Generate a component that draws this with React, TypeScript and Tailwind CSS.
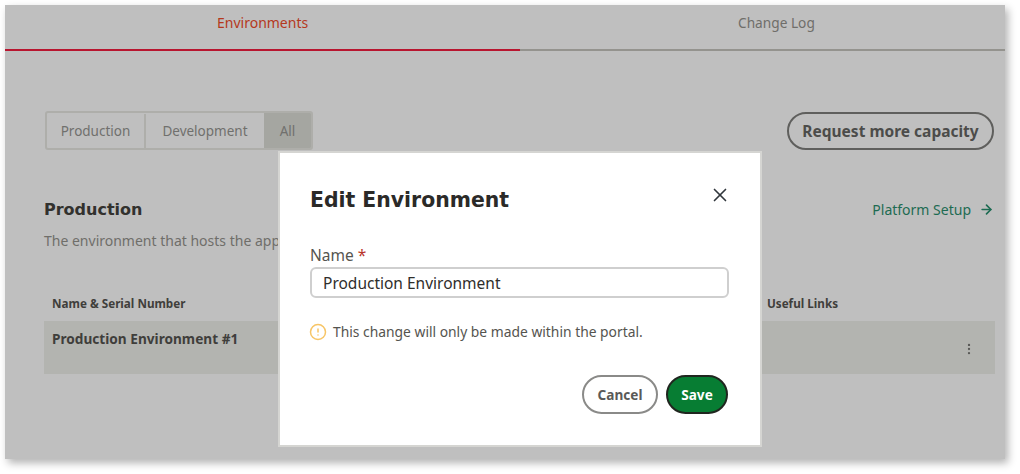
import { ArrowRight, CircleAlert, EllipsisVertical, X } from 'lucide-react';

const font = { fontFamily: '"Noto Sans", sans-serif' };

function Tabs() {
  return (
    <div className="flex h-[46px] shrink-0">
      <div className="w-[515px] border-b-2 border-[#b8152f] pt-[9px] pl-[212px] text-[14px] leading-[18px] text-[#b5381c]">
        Environments
      </div>
      <div className="flex-1 border-b-2 border-[#94938e] pt-[9px] pl-[218px] text-[13.7px] leading-[18px] text-[#6f6e6a]">
        Change Log
      </div>
    </div>
  );
}

function Filters() {
  return (
    <div className="ml-[1px] flex h-[39px] w-[268px] overflow-hidden rounded-[3px] border-2 border-[#aeaeaa] pt-[1px] text-[13.5px] text-[#70706d]">
      <div className="flex w-[99px] items-center justify-center border-r-2 border-[#aeaeaa]">Production</div>
      <div className="flex w-[118px] items-center justify-center">Development</div>
      <div className="-mt-[1px] flex flex-1 items-center justify-center bg-[#a5a6a1] pt-[1px]">All</div>
    </div>
  );
}

function EditModal() {
  return (
    <div className="absolute left-[273px] top-[146px] flex h-[296px] w-[484px] flex-col border-2 border-[#d5d5d2] bg-white px-[30px]">
      <div className="flex items-start justify-between pt-[32px]">
        <h2 className="font-['DejaVu_Sans'] text-[20.4px] leading-[30px] font-bold text-[#2b2a28]">Edit Environment</h2>
        <X className="mt-[-1px] mr-[-1px] h-[22px] w-[22px] text-[#30363c]" strokeWidth={1.8} />
      </div>
      <div className="mt-[30px] text-[15.5px] leading-[20px] text-[#55544f]">
        Name <span className="text-[#b8352a]">*</span>
      </div>
      <div className="mt-[2px] flex h-[31px] w-[419px] items-center rounded-[6px] border-2 border-[#cfcfcf] px-[11px] pt-[2px] text-[15.5px] text-[#2f2e2b]">
        Production Environment
      </div>
      <div className="mt-[25px] flex items-center gap-[6px] text-[13.85px] leading-[18px] text-[#55544f]">
        <CircleAlert className="-ml-[1px] h-[18px] w-[18px] text-[#f7c566]" strokeWidth={2} />
        This change will only be made within the portal.
      </div>
      <div className="mt-[34px] flex w-[418px] justify-end gap-[8px] text-[13.6px] font-bold">
        <button className="h-[39px] w-[76px] rounded-full border-2 border-[#8a8a88] pt-[1px] text-[#5a5a58]">Cancel</button>
        <button className="h-[39px] w-[62px] rounded-full border-2 border-[#20261f] bg-[#077d33] pt-[1px] text-white">Save</button>
      </div>
    </div>
  );
}

export default function App() {
  return (
    <div className="h-[474px] w-[1020px] overflow-hidden bg-white pt-[5px] pl-[5px]" style={font}>
      <div className="relative flex h-[454px] w-[1000px] flex-col overflow-hidden bg-[#bfbfbf] shadow-[3px_4px_8px_rgba(0,0,0,0.3)]">
        <Tabs />
        <div className="flex flex-col px-[39px] pt-[60px]">
          <div className="flex items-start justify-between">
            <Filters />
            <button className="mt-[1px] mr-[-28px] h-[38px] w-[207px] rounded-full border-2 border-[#5f5f5d] pt-[1px] text-[15.5px] font-bold text-[#4c4c4a]">
              Request more capacity
            </button>
          </div>
          <div className="mt-[49px] flex items-center justify-between">
            <h3 className="font-['DejaVu_Sans'] text-[16px] leading-[22px] font-bold text-[#32312e]">Production</h3>
            <div className="mt-[-2px] mr-[-28px] flex items-center gap-[8px] text-[14px] text-[#1d6b52]">
              Platform Setup
              <ArrowRight className="h-[15px] w-[15px]" strokeWidth={2.6} />
            </div>
          </div>
          <p className="mt-[11px] text-[14px] leading-[18px] text-[#6f6e6a]">The environment that hosts the app</p>
          <div className="mt-[46px] flex justify-between text-[11.7px] leading-[15px] font-bold text-[#3f3e3b]">
            <span className="pl-[8px]">Name &amp; Serial Number</span>
            <span className="mr-[128px]">Useful Links</span>
          </div>
          <div className="mt-[10px] mr-[-29px] flex h-[53px] justify-between bg-[#b3b4b0] pr-[19px] pl-[8px]">
            <span className="pt-[9px] text-[13.65px] leading-[18px] font-bold text-[#3f3e3b]">Production Environment #1</span>
            <EllipsisVertical className="mt-[21px] h-[14px] w-[14px] text-[#5a5a58]" />
          </div>
        </div>
        <EditModal />
      </div>
    </div>
  );
}
